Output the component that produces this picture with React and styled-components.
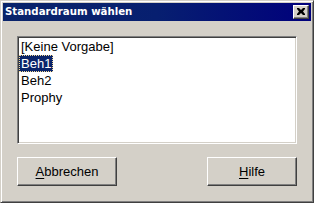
import React from "react";
import styled, { createGlobalStyle } from "styled-components";

const Global = createGlobalStyle`
  html, body { margin: 0; padding: 0; background: #d4d0c8; }
  * { box-sizing: border-box; }
`;

const Window = styled.div`
  width: 314px;
  height: 203px;
  background: #d4d0c8;
  border: 1px solid;
  border-color: #d4d0c8 #404040 #404040 #d4d0c8;
  box-shadow: inset 1px 1px #ffffff, inset -1px -1px #808080;
  padding: 2px;
  display: flex;
  flex-direction: column;
  font-family: "Liberation Sans", Arial, sans-serif;
`;

const TitleBar = styled.div`
  height: 18px;
  background: linear-gradient(90deg, #0a246a 0%, #071f70 50%, #00007c 100%);
  display: flex;
  align-items: center;
  justify-content: space-between;
  padding: 0 2px 0 2px;
`;

const Title = styled.span`
  color: #ffffff;
  font-family: "DejaVu Sans", Verdana, sans-serif;
  font-weight: bold;
  font-size: 10.2px;
  line-height: 18px;
`;

const CloseButton = styled.div`
  width: 16px;
  height: 14px;
  background: #d4d0c8;
  border: 1px solid;
  border-color: #ffffff #404040 #404040 #ffffff;
  box-shadow: inset -1px -1px #808080;
  display: flex;
  align-items: center;
  justify-content: center;
  padding-bottom: 1px;
`;

const Client = styled.div`
  flex: 1;
  display: flex;
  flex-direction: column;
  padding: 15px 14px 0 14px;
`;

const ListBox = styled.div`
  width: 280px;
  height: 108px;
  background: #ffffff;
  border: 1px solid;
  border-color: #808080 #ffffff #ffffff #808080;
  box-shadow: inset 1px 1px #404040, inset -1px -1px #d4d0c8;
  padding: 1px;
  display: flex;
  flex-direction: column;
  align-items: flex-start;
`;

const Item = styled.div`
  height: 17px;
  line-height: 15px;
  font-size: 13px;
  padding: 0 1px;
  border: 1px dotted ${(p) => (p.$selected ? "#f5db95" : "transparent")};
  background: ${(p) => (p.$selected ? "#0a246a" : "transparent")};
  color: ${(p) => (p.$selected ? "#ffffff" : "#000000")};
  white-space: nowrap;
`;

const ButtonRow = styled.div`
  display: flex;
  justify-content: space-between;
  margin-top: 13px;
`;

const Button = styled.div`
  width: ${(p) => p.$w}px;
  height: 29px;
  background: #d4d0c8;
  border: 1px solid;
  border-color: #ffffff #404040 #404040 #ffffff;
  box-shadow: inset -1px -1px #808080;
  display: flex;
  align-items: center;
  justify-content: center;
  font-size: 13px;
  color: #000000;
`;

const U = styled.span`
  text-decoration: underline;
  text-underline-offset: 2px;
`;

export default function App() {
  return (
    <>
      <Global />
      <Window>
        <TitleBar>
          <Title>Standardraum wählen</Title>
          <CloseButton>
            <svg width="8" height="7" viewBox="0 0 8 7">
              <path d="M0 0h2l2 2 2-2h2v1l-2 2.5 2 2.5v1h-2l-2-2-2 2h-2v-1l2-2.5-2-2.5z" fill="#000" />
            </svg>
          </CloseButton>
        </TitleBar>
        <Client>
          <ListBox>
            <Item>[Keine Vorgabe]</Item>
            <Item $selected>Beh1</Item>
            <Item>Beh2</Item>
            <Item>Prophy</Item>
          </ListBox>
          <ButtonRow>
            <Button $w={100}>
              <span><U>A</U>bbrechen</span>
            </Button>
            <Button $w={90}>
              <span><U>H</U>ilfe</span>
            </Button>
          </ButtonRow>
        </Client>
      </Window>
    </>
  );
}
